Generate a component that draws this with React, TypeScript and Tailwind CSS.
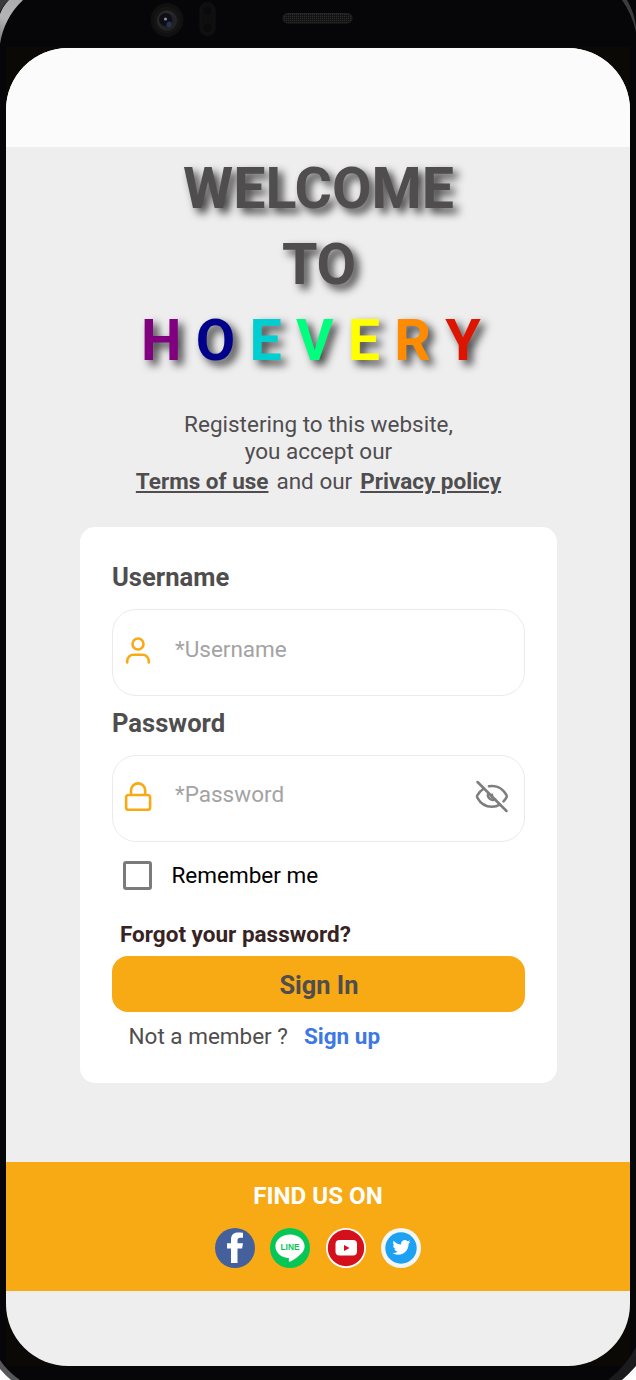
import React from "react";

const letters = [
  { ch: "H", cls: "text-[#800080]" },
  { ch: "O", cls: "text-[#00008b]" },
  { ch: "E", cls: "text-[#00ced1]" },
  { ch: "V", cls: "text-[#00ff7f]" },
  { ch: "E", cls: "text-[#ffff00]" },
  { ch: "R", cls: "text-[#ff8c00]" },
  { ch: "Y", cls: "text-[#dd1400]" },
];

function PhoneFrame() {
  return (
    <svg className="absolute inset-0" width="636" height="1380" viewBox="0 0 636 1380" fill="none">
      <defs>
        <linearGradient id="rim" x1="0" y1="44" x2="24" y2="0" gradientUnits="userSpaceOnUse">
          <stop offset="0" stopColor="#77777a" />
          <stop offset="0.5" stopColor="#b4b4b6" />
          <stop offset="1" stopColor="#aaaaac" />
        </linearGradient>
        <radialGradient id="lens" cx="0.55" cy="0.55" r="0.5">
          <stop offset="0" stopColor="#25304f" />
          <stop offset="0.5" stopColor="#1c1e25" />
          <stop offset="1" stopColor="#29292b" />
        </radialGradient>
        <pattern id="mesh" width="2" height="2" patternUnits="userSpaceOnUse">
          <rect width="2" height="2" fill="#141414" />
          <rect width="1" height="1" fill="#2c2c2c" />
        </pattern>
      </defs>
      <rect width="636" height="1380" fill="#060609" />
      <rect x="6" y="47" width="624" height="1319" fill="#0a0906" />
      <path d="M0 0H9Q3 5 0 12Z" fill="#3a3a3e" />
      <path d="M9 0H23Q4 18 0 44V14Q3 6 9 0Z" fill="url(#rim)" />
      <path d="M622 0H627Q634 12 636 26V32Q632 14 622 0Z" fill="#3c3c3e" />
      <path d="M0 1360Q8 1372 20 1380H0Z" fill="#55575b" />
      <path d="M0 1369Q5 1375 11 1380H0Z" fill="#fff" />
      <path d="M636 1347Q626 1366 608 1380H636Z" fill="#1b1b1e" />
      <path d="M636 1366Q629 1374 622 1380H636Z" fill="#fff" />
      <ellipse cx="167" cy="20" rx="16.5" ry="17" fill="#101010" />
      <circle cx="167" cy="20" r="13.5" fill="#151514" />
      <circle cx="167" cy="20.500" r="10" fill="url(#lens)" />
      <circle cx="165.500" cy="19.500" r="6.500" fill="#0d0e16" />
      <ellipse cx="169" cy="24.500" rx="2.500" ry="3" fill="#28324f" />
      <circle cx="165.500" cy="19" r="1.600" fill="#8d8a90" />
      <rect x="200" y="2.500" width="15" height="33" rx="7.500" fill="#0e0e0e" stroke="#131313" />
      <circle cx="207.500" cy="11" r="5" fill="#0a0a0a" stroke="#131313" />
      <circle cx="207.500" cy="27.500" r="5" fill="#0a0a0a" stroke="#131313" />
      <rect x="283" y="13.500" width="69" height="9.500" rx="4.500" fill="url(#mesh)" stroke="#232323" />
    </svg>
  );
}

function UserIcon() {
  return (
    <svg width="28" height="30" viewBox="0 0 28 30" fill="none" stroke="#f8aa14" strokeWidth="2.6" strokeLinecap="round">
      <circle cx="14" cy="8" r="5.500" />
      <path d="M3.200 26.500V25a6.300 6.300 0 0 1 6.300-6.300h9A6.300 6.300 0 0 1 24.800 25v1.500" />
    </svg>
  );
}

function LockIcon() {
  return (
    <svg width="28" height="32" viewBox="0 0 28 32" fill="none" stroke="#f8aa14" strokeWidth="2.600">
      <rect x="2.100" y="14" width="24" height="14.800" rx="2.600" />
      <path d="M7 14V9.500a7.100 7.100 0 0 1 14.200 0V14" />
    </svg>
  );
}

function EyeOffIcon() {
  return (
    <svg className="-mt-px" width="34" height="34" viewBox="0 0 34 34" fill="none" stroke="#7d7d7d" strokeWidth="2.500" strokeLinecap="round" strokeLinejoin="round">
      <path d="M2.500 2L31.500 31" />
      <path d="M9 8.500C6 10.300 3.700 12.800 2.300 15.300c-.5 1-.5 1.500 0 2.400C5.300 23.300 10.500 26.800 17 26.800c2.900 0 5.600-.8 7.800-2.100" />
      <path d="M13.900 6.300c7.200-1.500 13.800 2 17.500 8.700.6 1 .6 1.700 0 2.700-.8 1.300-1.700 2.400-2.900 3.600" />
      <path d="M13.300 13.300c-1.800 4.600 3.500 8.200 6.900 5.900" />
      <path d="M17 14.800v2.400" />
    </svg>
  );
}

function FacebookIcon() {
  return (
    <svg width="40" height="40" viewBox="0 0 40 40">
      <circle cx="20" cy="20" r="20" fill="#44619d" />
      <path d="M16 35V20.500h-4v-5.300h4v-3.400C16 6.700 18.700 4.500 23 4.500c2 0 3.800.1 5 .3v5h-2.700c-2.200 0-2.800 1-2.800 2.700v2.700H28l-.9 5.300h-4.600V35z" fill="#fff" />
    </svg>
  );
}

function LineIcon() {
  return (
    <svg width="40" height="40" viewBox="0 0 40 40">
      <circle cx="20" cy="20" r="20" fill="#06c755" />
      <path d="M20 6.500c8.200 0 14.600 5.200 14.600 11.800 0 4.700-3.500 8.200-7.700 11.200-3 2.200-5.900 4-7.300 4.300-1.300.2-.8-1.400-.5-3.500C11.200 29.700 5.400 24.700 5.400 18.300 5.400 11.700 11.800 6.500 20 6.500z" fill="#fff" />
      <text x="20" y="21.500" textAnchor="middle" fontSize="9" fontWeight="700" fontFamily="Liberation Sans, sans-serif" textLength="19" lengthAdjust="spacingAndGlyphs" fill="#06c755">LINE</text>
    </svg>
  );
}

function YoutubeIcon() {
  return (
    <svg width="40" height="40" viewBox="0 0 40 40">
      <circle cx="20" cy="20" r="20" fill="#fff" />
      <circle cx="20" cy="20" r="18.200" fill="#d5101d" />
      <rect x="9.500" y="12" width="21.500" height="15.500" rx="4" fill="#fff" />
      <path d="M18 17l5.500 3-5.500 3z" fill="#d5101d" />
    </svg>
  );
}

function TwitterIcon() {
  return (
    <svg width="40" height="40" viewBox="0 0 40 40">
      <circle cx="20" cy="20" r="20" fill="#f5f5f5" />
      <circle cx="20" cy="20" r="15.700" fill="#1da1f2" />
      <path transform="translate(11.400 10.400) scale(.75)" d="M23.950 4.570a10 10 0 0 1-2.820.77 4.960 4.960 0 0 0 2.160-2.720c-.95.550-2 .96-3.130 1.180a4.920 4.920 0 0 0-8.380 4.480C7.690 8.090 4.070 6.130 1.640 3.160a4.820 4.820 0 0 0-.67 2.480c0 1.710.87 3.210 2.190 4.100a4.900 4.900 0 0 1-2.230-.62v.06a4.920 4.920 0 0 0 3.950 4.830 5 5 0 0 1-2.210.08 4.940 4.940 0 0 0 4.600 3.420A9.870 9.870 0 0 1 0 19.540a14 14 0 0 0 7.550 2.210c9.050 0 14-7.500 14-13.990 0-.210 0-.420-.020-.630a9.940 9.940 0 0 0 2.460-2.550z" fill="#fff" />
    </svg>
  );
}

export default function App() {
  return (
    <div className="relative h-[1380px] w-[636px] overflow-hidden bg-[#060609] px-[6px] pt-12 font-['Roboto',sans-serif] text-[#4f4d4e]">
      <PhoneFrame />
      <main className="relative flex h-[1318px] flex-col overflow-hidden rounded-[62px] bg-[#eeeeee]">
        <div className="h-[99px] shrink-0 bg-[#fbfbfb]" />

        <h1 className="mt-1 text-center text-[57.300px] leading-[76px] font-bold [text-shadow:5px_5px_8px_#000000c0]">
          <span className="block pl-px">WELCOME</span>
          <span className="block pl-[2px]">TO</span>
          <span className="block whitespace-pre">
            {letters.map((l, i) => (
              <span key={i} className={l.cls}>{l.ch + " "}</span>
            ))}
          </span>
        </h1>

        <div className="mt-8 pl-px text-center text-[22.500px] leading-[27px]">
          <p>Registering to this website,</p>
          <p>you accept our</p>
          <p className="mt-[3px] flex justify-center gap-2">
            <a className="font-bold underline decoration-[1.500px] underline-offset-[2px]">Terms of use</a>
            <span>and our</span>
            <a className="font-bold underline decoration-[1.500px] underline-offset-[2px]">Privacy policy</a>
          </p>
        </div>

        <form className="mt-8 ml-[74px] flex h-[556px] w-[477px] shrink-0 flex-col rounded-[15px] bg-white px-8 pt-[34px] text-[22.500px]">
          <label className="text-[25.600px] leading-8 font-bold">Username</label>
          <div className="mt-4 flex h-[87px] w-[413px] shrink-0 rounded-[24px] border border-[#ebebeb] pt-[26px] pl-[11px]">
            <UserIcon />
            <span className="ml-[23px] leading-[27px] text-[#a3a3a3]">*Username</span>
          </div>
          <label className="mt-[11px] text-[25.600px] leading-8 font-bold">Password</label>
          <div className="mt-4 flex h-[87px] w-[413px] shrink-0 rounded-[24px] border border-[#ebebeb] pt-[25px] pr-[15px] pl-[11px]">
            <LockIcon />
            <span className="ml-[23px] flex-1 leading-[27px] text-[#a3a3a3]">*Password</span>
            <EyeOffIcon />
          </div>
          <div className="mt-[19px] ml-[11px] flex h-[29px] items-center gap-[19.500px] text-black">
            <span className="size-[29px] rounded-[3px] border-[3px] border-[#7b7b7b]" />
            <span>Remember me</span>
          </div>
          <a className="mt-[31px] ml-2 leading-[27px] font-bold text-[#382324]">Forgot your password?</a>
          <button type="button" className="mt-[7.500px] h-[56px] w-[413px] shrink-0 rounded-[16px] bg-[#f8aa14] pt-[2px] pl-px text-[25.400px] leading-8 font-bold">Sign In</button>
          <p className="mt-[11.500px] ml-[16.500px] flex gap-4 leading-[27px]">
            <span>Not a member ?</span>
            <a className="font-bold text-[#3d78e3]">Sign up</a>
          </p>
        </form>

        <footer className="mt-[79px] flex h-[129px] shrink-0 flex-col items-center bg-[#f8aa14] pt-[20px]">
          <h2 className="text-[24.200px] leading-[29px] font-bold text-white">FIND US ON</h2>
          <div className="mt-[17px] flex gap-[15.500px]">
            <FacebookIcon />
            <LineIcon />
            <YoutubeIcon />
            <TwitterIcon />
          </div>
        </footer>
      </main>
    </div>
  );
}
